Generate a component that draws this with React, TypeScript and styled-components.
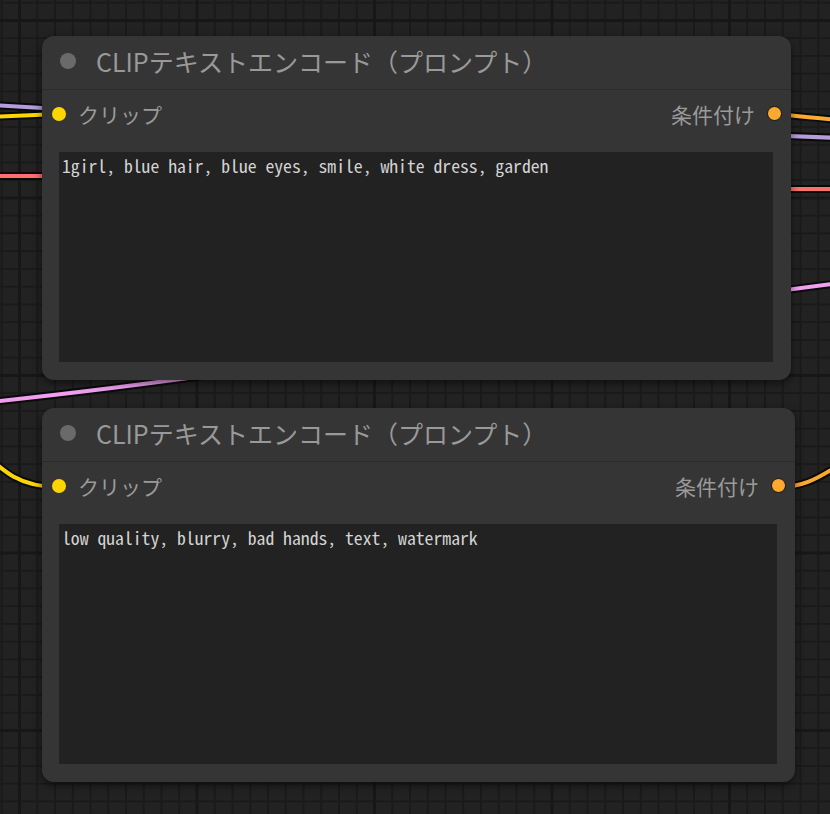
import styled, { createGlobalStyle } from 'styled-components';

const GlobalStyle = createGlobalStyle`
  html, body {
    margin: 0;
    padding: 0;
    background: #222;
  }
`;

// ComfyUI canvas: 10px grid at ~1.775 zoom, heavy line every 10 cells
const Canvas = styled.div`
  position: relative;
  width: 830px;
  height: 814px;
  overflow: hidden;
  background-color: #222222;
  background-image:
    linear-gradient(to right, #171717 3px, transparent 3px),
    linear-gradient(to bottom, #171717 3px, transparent 3px),
    linear-gradient(to right, #1a1a1a 2px, transparent 2px),
    linear-gradient(to bottom, #1a1a1a 2px, transparent 2px);
  background-size: 177.5px 177.5px, 177.5px 177.5px, 17.75px 17.75px, 17.75px 17.75px;
  background-position: 18px 0, 0 19px, 0.75px 0, 0 1.7px;
  font-family: "Noto Sans CJK JP", "Noto Sans", sans-serif;
`;

const Wires = styled.svg`
  position: absolute;
  inset: 0;
  width: 100%;
  height: 100%;
`;

const Node = styled.div<{ $x: number; $y: number; $w: number; $h: number }>`
  position: absolute;
  left: ${p => p.$x}px;
  top: ${p => p.$y}px;
  width: ${p => p.$w}px;
  height: ${p => p.$h}px;
  background: #353535;
  border-radius: 12px;
  box-shadow: 0 3px 8px rgba(0, 0, 0, 0.55);
  display: flex;
  flex-direction: column;
`;

const Header = styled.div`
  height: 54px;
  flex-shrink: 0;
  display: flex;
  align-items: center;
  gap: 20px;
  padding: 0 0 4px 18px;
  box-sizing: border-box;
  border-bottom: 1px solid #2b2b2b;
`;

const TitleDot = styled.span`
  width: 16px;
  height: 16px;
  border-radius: 50%;
  background: #6a6a6a;
  flex-shrink: 0;
`;

const Title = styled.span`
  font-size: 25px;
  color: #999999;
  white-space: nowrap;
`;

const SlotRow = styled.div`
  height: 47px;
  flex-shrink: 0;
  display: flex;
  align-items: center;
  justify-content: space-between;
  padding: 0 9px 0 10px;
`;

const Slot = styled.div`
  display: flex;
  align-items: center;
  gap: 12px;
`;

const SlotDot = styled.span<{ $color: string; $outlined?: boolean }>`
  width: ${p => (p.$outlined ? 13 : 14)}px;
  height: ${p => (p.$outlined ? 13 : 14)}px;
  border-radius: 50%;
  background: ${p => p.$color};
  border: ${p => (p.$outlined ? '1.5px solid #111' : 'none')};
`;

const SlotLabel = styled.span`
  font-size: 21px;
  color: #9a9a9a;
`;

const WidgetArea = styled.div`
  flex: 1;
  display: flex;
  padding: 15px 18px 18px 17px;
  min-height: 0;
`;

const Prompt = styled.textarea`
  flex: 1;
  resize: none;
  overflow: hidden;
  border: none;
  outline: none;
  margin: 0;
  background: #222222;
  color: #d4d4d4;
  font-family: "Noto Sans Mono CJK JP", "Noto Sans CJK JP", "DejaVu Sans Mono", monospace;
  font-size: 17.7px;
  line-height: 1.2;
  padding: 3px 3px;
`;

type Link = { d: string; color: string };

const links: Link[] = [
  { d: 'M -10 105 L 60 109', color: '#b39ddb' },
  { d: 'M -10 117 L 59 114', color: '#ffd500' },
  { d: 'M -10 176 L 60 176', color: '#ff6e6e' },
  { d: 'M 774 114 C 800 116, 815 118, 840 120', color: '#ffa931' },
  { d: 'M 760 135 L 840 138', color: '#b39ddb' },
  { d: 'M 760 189 L 840 189', color: '#ff6e6e' },
  { d: 'M -10 402 C 280 372, 560 318, 840 283', color: '#f09ff0' },
  { d: 'M -30 440 C 0 468, 15 487, 59 487', color: '#ffd500' },
  { d: 'M 779 487 C 800 487, 815 481, 840 464', color: '#ffa931' },
];

type NodeData = {
  x: number;
  y: number;
  w: number;
  h: number;
  prompt: string;
};

const nodes: NodeData[] = [
  { x: 42, y: 36, w: 749, h: 344, prompt: '1girl, blue hair, blue eyes, smile, white dress, garden' },
  { x: 42, y: 408, w: 753, h: 374, prompt: 'low quality, blurry, bad hands, text, watermark' },
];

export default function App() {
  return (
    <>
      <GlobalStyle />
      <Canvas>
        <Wires viewBox="0 0 830 814">
          {links.map((l, i) => (
            <g key={i} fill="none" strokeLinecap="round">
              <path d={l.d} stroke="#0a0a0a" strokeWidth={8} />
              <path d={l.d} stroke={l.color} strokeWidth={4} />
            </g>
          ))}
        </Wires>
        {nodes.map((n, i) => (
          <Node key={i} $x={n.x} $y={n.y} $w={n.w} $h={n.h}>
            <Header>
              <TitleDot />
              <Title>CLIPテキストエンコード（プロンプト）</Title>
            </Header>
            <SlotRow>
              <Slot>
                <SlotDot $color="#ffd500" />
                <SlotLabel>クリップ</SlotLabel>
              </Slot>
              <Slot>
                <SlotLabel>条件付け</SlotLabel>
                <SlotDot $color="#ffa931" $outlined />
              </Slot>
            </SlotRow>
            <WidgetArea>
              <Prompt readOnly value={n.prompt} spellCheck={false} />
            </WidgetArea>
          </Node>
        ))}
      </Canvas>
    </>
  );
}
